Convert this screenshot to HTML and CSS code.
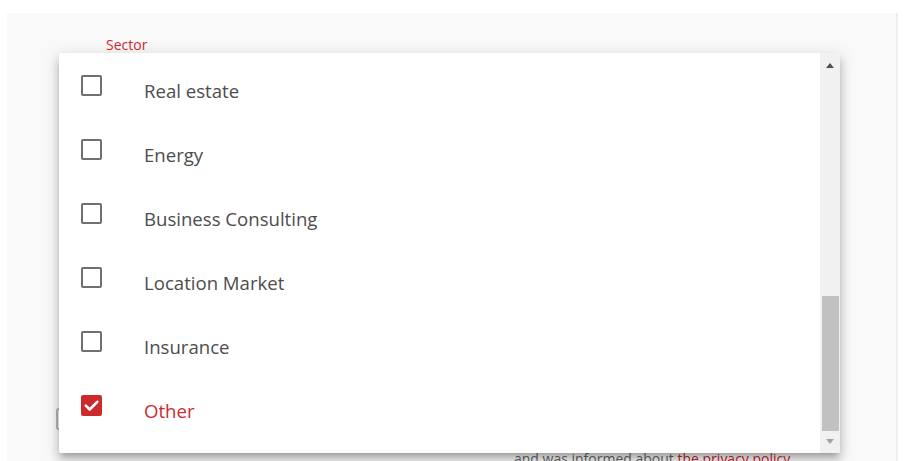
FILE: index.html
```html
<!DOCTYPE html>
<html lang="en">
<head>
<meta charset="utf-8">
<title>Sector</title>
<link rel="stylesheet" href="styles.css">
</head>
<body>
<div class="panel">
  <div class="field-label">Sector</div>
  <div class="consent">
    <span class="consent-box"></span>
    <p class="consent-text">and was informed about <a href="#" class="link">the privacy policy</a></p>
  </div>

  <div class="menu" role="listbox">
    <ul class="options">
      <li class="option"><span class="check"></span><span class="option-text">Real estate</span></li>
      <li class="option"><span class="check"></span><span class="option-text">Energy</span></li>
      <li class="option"><span class="check"></span><span class="option-text">Business Consulting</span></li>
      <li class="option"><span class="check"></span><span class="option-text">Location Market</span></li>
      <li class="option"><span class="check"></span><span class="option-text">Insurance</span></li>
      <li class="option selected">
        <span class="check">
          <svg viewBox="0 0 21 21" width="21" height="21"><path d="M4.8 10.6l3.9 3.9L16.3 6.8" fill="none" stroke="#fff" stroke-width="2.6" stroke-linecap="round" stroke-linejoin="round"/></svg>
        </span>
        <span class="option-text">Other</span>
      </li>
    </ul>
    <div class="scrollbar">
      <span class="arrow up"></span>
      <span class="track"><span class="thumb"></span></span>
      <span class="arrow down"></span>
    </div>
  </div>
</div>
</body>
</html>
```

FILE: styles.css
```css
html, body {
  margin: 0;
  height: 100%;
  background: #fff;
  overflow: hidden;
}

body {
  font-family: "Open Sans", "Noto Sans", sans-serif;
}

.panel {
  position: relative;
  margin: 13px 6px 0 7px;
  height: calc(100% - 13px);
  background: #f9f9f9;
  border-right: 2px solid #eeeeee;
  box-sizing: border-box;
}

.field-label {
  padding: 23px 0 0 99px;
  font-size: 14px;
  line-height: 18px;
  color: #d0282e;
}

.consent {
  display: flex;
  align-items: flex-start;
  padding-top: 395px;
}

.consent-box {
  width: 20px;
  height: 22px;
  margin: -41px 0 0 49px;
  border: 2px solid #b4b4b4;
  border-radius: 3px;
  box-sizing: border-box;
}

.consent-text {
  margin: 0 0 0 438px;
  font-size: 14px;
  line-height: 20px;
  color: #666;
}

.link {
  color: #c8232b;
  text-decoration: none;
}

/* dropdown overlay */
.menu {
  position: absolute;
  left: 52px;
  top: 40px;
  width: 781px;
  height: 400px;
  display: flex;
  background: #fff;
  border-radius: 2px;
  box-shadow: 0 5px 5px -3px rgba(0,0,0,.2), 0 8px 10px 1px rgba(0,0,0,.14), 0 3px 14px 2px rgba(0,0,0,.12);
  overflow: hidden;
}

.options {
  flex: 1;
  list-style: none;
  margin: 0;
  padding: 5px 0 0;
}

.option {
  display: flex;
  align-items: center;
  height: 64px;
  padding-left: 22px;
  font-size: 18.6px;
  color: #4d4d4d;
}

.check {
  width: 21px;
  height: 21px;
  margin-top: -10px;
  flex: none;
  box-sizing: border-box;
  border: 2px solid #707070;
  border-radius: 2px;
}

.check svg {
  display: block;
  margin: -2px;
}

.selected .check {
  background: #cd2a2f;
  border-color: #cd2a2f;
}

.selected {
  color: #cd2a2f;
}

.option-text {
  margin-left: 42px;
}

.scrollbar {
  width: 20px;
  flex: none;
  display: flex;
  flex-direction: column;
  align-items: center;
  background: #f1f1f1;
}

.arrow {
  width: 0;
  height: 0;
  border-left: 4.5px solid transparent;
  border-right: 4.5px solid transparent;
}

.arrow.up {
  margin: 10px 0 0;
  border-bottom: 5px solid #505050;
}

.arrow.down {
  margin: 0 0 9px;
  border-top: 5px solid #a3a3a3;
}

.track {
  flex: 1;
  display: flex;
  flex-direction: column;
  justify-content: flex-end;
  align-self: stretch;
  padding: 0 1px 0 2px;
  margin-bottom: 8px;
}

.thumb {
  height: 135px;
  background: #c1c1c1;
}
```
